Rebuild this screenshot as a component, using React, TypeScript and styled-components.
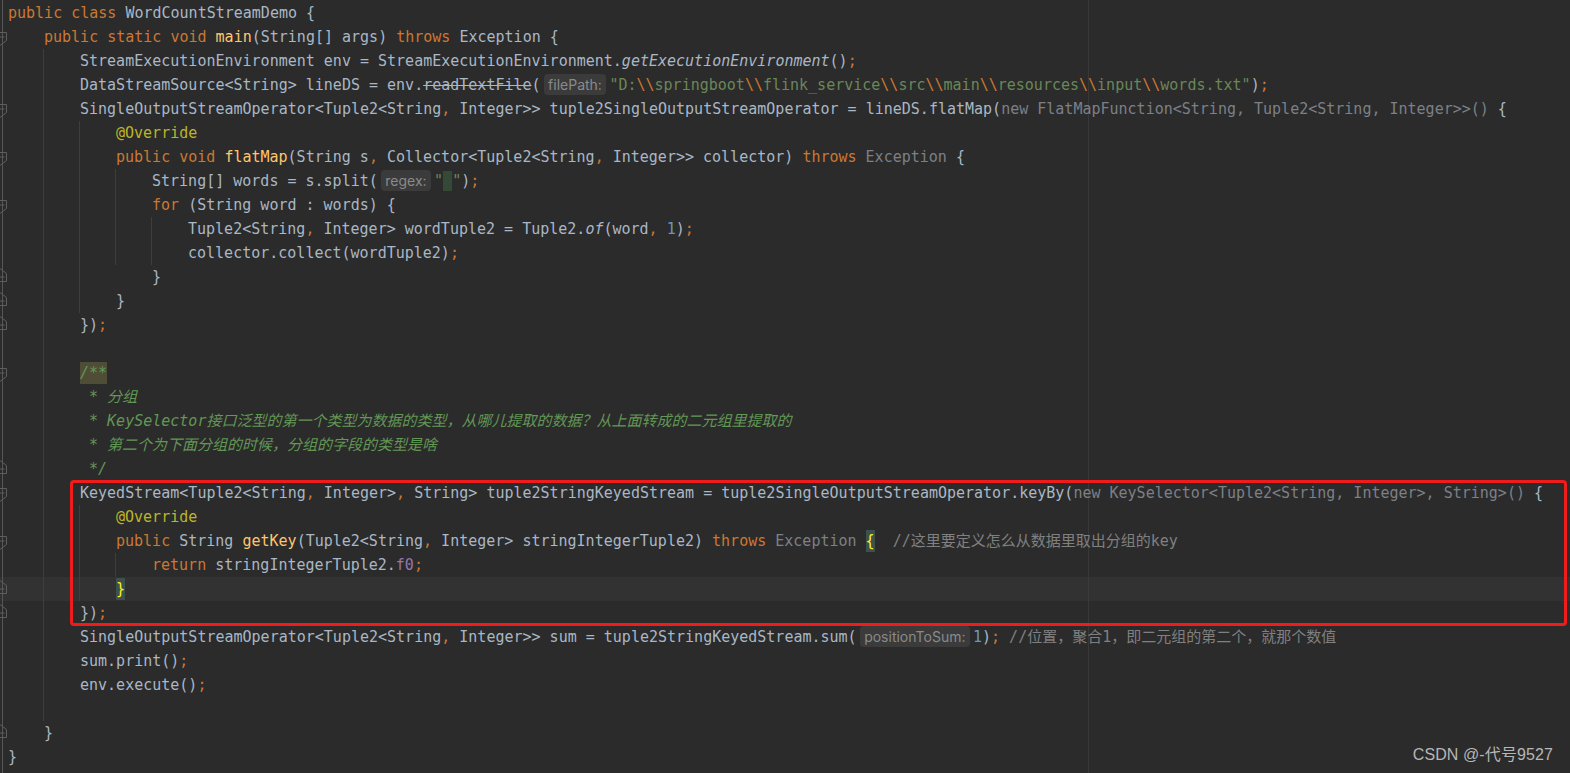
import React from 'react';
import styled, { createGlobalStyle, css } from 'styled-components';

const GlobalStyle = createGlobalStyle`
  html, body { margin: 0; padding: 0; background: #2b2b2b; }
  #root { width: 1570px; height: 773px; }
`;

type Kind =
  | 't' | 'k' | 'm' | 'a' | 's' | 'e' | 'c' | 'lc' | 'g' | 'i' | 'f' | 'n' | 'p' | 'st'
  | 'hint' | 'ws' | 'bm' | 'dh';
type Seg = [Kind, string];

interface LineData {
  indent: number;
  guides: number[];
  fold?: 'start' | 'end';
  current?: boolean;
  segs: Seg[];
}

const Editor = styled.div`
  position: relative;
  width: 1570px;
  height: 773px;
  box-sizing: border-box;
  padding-top: 1px;
  overflow: hidden;
  display: flex;
  flex-direction: column;
  font-family: "DejaVu Sans Mono", "Noto Sans CJK SC", monospace;
  font-size: 15px;
  color: #a9b7c6;
  background:
    linear-gradient(#575757, #575757) no-repeat 2px 0 / 1px 100%,
    linear-gradient(#383838, #383838) no-repeat 1088px 0 / 1px 100%,
    #2b2b2b;
`;

const Row = styled.div<{ $current?: boolean }>`
  display: flex;
  flex: none;
  height: 24px;
  ${(p) =>
    p.$current &&
    css`
      background:
        linear-gradient(#575757, #575757) no-repeat 2px 0 / 1px 100%,
        linear-gradient(#3a3a3a, #3a3a3a) no-repeat 1088px 0 / 1px 100%,
        #323232;
    `}
`;

const GutterCell = styled.div`
  flex: none;
  width: 8px;
  height: 24px;
  display: flex;
`;

const IndentCell = styled.div<{ $guide: boolean }>`
  flex: none;
  width: 36px;
  height: 24px;
  ${(p) =>
    p.$guide &&
    css`
      background: linear-gradient(#3e3e3e, #3e3e3e) no-repeat 35px 0 / 1px 100%;
    `}
`;

const Code = styled.div`
  flex: 1;
  white-space: pre;
  line-height: 24px;
  height: 24px;
`;

const kindStyle: Record<string, ReturnType<typeof css>> = {
  t: css`color: #a9b7c6;`,
  k: css`color: #cc7832;`,
  m: css`color: #ffc66d;`,
  a: css`color: #bbb529;`,
  s: css`color: #6a8759;`,
  e: css`color: #cc7832;`,
  c: css`color: #629755; font-style: italic;`,
  lc: css`color: #808080;`,
  g: css`color: #7c8087;`,
  i: css`color: #a9b7c6; font-style: italic;`,
  f: css`color: #9876aa;`,
  n: css`color: #6897bb;`,
  p: css`color: #cc7832;`,
  st: css`color: #a9b7c6; text-decoration: line-through; text-decoration-thickness: 1px;`,
};

const Token = styled.span<{ $kind: Kind }>`
  ${(p) => kindStyle[p.$kind]}
`;

const Hint = styled.span`
  display: inline-block;
  vertical-align: top;
  height: 21px;
  margin: 1px 3px 0 3px;
  padding: 0 4.5px;
  border-radius: 4px;
  background: #3b3b3b;
  color: #8a8a8a;
  font-family: Inter, "Noto Sans", sans-serif;
  font-size: 14px;
  line-height: 21px;
`;

const SpaceMark = styled.span`
  display: inline-block;
  vertical-align: top;
  height: 20px;
  margin-top: 2px;
  line-height: 20px;
  background: #344a37;
`;

const BraceMatch = styled.span`
  display: inline-block;
  vertical-align: top;
  height: 22px;
  margin-top: 1px;
  line-height: 22px;
  background: #3b514d;
  color: #ffef28;
`;

const DocStart = styled.span`
  display: inline-block;
  vertical-align: top;
  height: 22px;
  margin-top: 1px;
  line-height: 22px;
  background: #4f4d35;
  color: #629755;
  font-style: italic;
`;

const Marked = styled.div`
  position: relative;
  display: flex;
  flex-direction: column;
  &::after {
    content: '';
    position: absolute;
    left: 70px;
    right: 3px;
    top: -1px;
    bottom: -1px;
    border: 3px solid #f01c1c;
    border-radius: 4px;
    pointer-events: none;
  }
`;

const Watermark = styled.div`
  position: absolute;
  right: 17px;
  bottom: 8px;
  font-family: "Liberation Sans", "Noto Sans CJK SC", sans-serif;
  font-size: 16px;
  color: #b6b6b6;
  letter-spacing: 0.1px;
`;

const FoldMarker: React.FC<{ type: 'start' | 'end' }> = ({ type }) => (
  <svg width="8" height="24" viewBox="0 0 8 24" fill="none">
    {type === 'start' ? (
      <path d="M-7 7.5H6.5V15.5L0 20.5L-7 15.5Z" stroke="#5e5e5e" strokeWidth="1" />
    ) : (
      <path d="M-7 16.5H6.5V8.5L0 3.5L-7 8.5Z" stroke="#5e5e5e" strokeWidth="1" />
    )}
    <path d="M0 12H4.5" stroke="#5e5e5e" strokeWidth="1" />
  </svg>
);

const G1 = [1];
const G12 = [1, 2];
const G123 = [1, 2, 3];
const G1234 = [1, 2, 3, 4];

const BS = '\\\\';

const lines: LineData[] = [
  { indent: 0, guides: [], segs: [['k', 'public class '], ['t', 'WordCountStreamDemo {']] },
  {
    indent: 1, guides: [], fold: 'start',
    segs: [['k', 'public static void '], ['m', 'main'], ['t', '(String[] args) '], ['k', 'throws '], ['t', 'Exception {']],
  },
  {
    indent: 2, guides: G1,
    segs: [['t', 'StreamExecutionEnvironment env = StreamExecutionEnvironment.'], ['i', 'getExecutionEnvironment'], ['t', '()'], ['p', ';']],
  },
  {
    indent: 2, guides: G1,
    segs: [
      ['t', 'DataStreamSource<String> lineDS = env.'], ['st', 'readTextFile'], ['t', '('], ['hint', 'filePath:'],
      ['s', '"D:'], ['e', BS], ['s', 'springboot'], ['e', BS], ['s', 'flink_service'], ['e', BS], ['s', 'src'], ['e', BS],
      ['s', 'main'], ['e', BS], ['s', 'resources'], ['e', BS], ['s', 'input'], ['e', BS], ['s', 'words.txt"'], ['t', ')'], ['p', ';'],
    ],
  },
  {
    indent: 2, guides: G1, fold: 'start',
    segs: [
      ['t', 'SingleOutputStreamOperator<Tuple2<String'], ['p', ','], ['t', ' Integer>> tuple2SingleOutputStreamOperator = lineDS.flatMap('],
      ['g', 'new FlatMapFunction<String, Tuple2<String, Integer>>() '], ['t', '{'],
    ],
  },
  { indent: 3, guides: G12, segs: [['a', '@Override']] },
  {
    indent: 3, guides: G12, fold: 'start',
    segs: [
      ['k', 'public void '], ['m', 'flatMap'], ['t', '(String s'], ['p', ','], ['t', ' Collector<Tuple2<String'], ['p', ','],
      ['t', ' Integer>> collector) '], ['k', 'throws '], ['g', 'Exception'], ['t', ' {'],
    ],
  },
  {
    indent: 4, guides: G123,
    segs: [['t', 'String[] words = s.split('], ['hint', 'regex:'], ['s', '"'], ['ws', ' '], ['s', '"'], ['t', ')'], ['p', ';']],
  },
  { indent: 4, guides: G123, fold: 'start', segs: [['k', 'for '], ['t', '(String word : words) {']] },
  {
    indent: 5, guides: G1234,
    segs: [['t', 'Tuple2<String'], ['p', ','], ['t', ' Integer> wordTuple2 = Tuple2.'], ['i', 'of'], ['t', '(word'], ['p', ','], ['t', ' '], ['n', '1'], ['t', ')'], ['p', ';']],
  },
  { indent: 5, guides: G1234, segs: [['t', 'collector.collect(wordTuple2)'], ['p', ';']] },
  { indent: 4, guides: G12, fold: 'end', segs: [['t', '}']] },
  { indent: 3, guides: G12, fold: 'end', segs: [['t', '}']] },
  { indent: 2, guides: G1, fold: 'end', segs: [['t', '})'], ['p', ';']] },
  { indent: 0, guides: G1, segs: [] },
  { indent: 2, guides: G1, fold: 'start', segs: [['dh', '/**']] },
  { indent: 2, guides: G1, segs: [['c', ' * 分组']] },
  { indent: 2, guides: G1, segs: [['c', ' * KeySelector接口泛型的第一个类型为数据的类型，从哪儿提取的数据？从上面转成的二元组里提取的']] },
  { indent: 2, guides: G1, segs: [['c', ' * 第二个为下面分组的时候，分组的字段的类型是啥']] },
  { indent: 2, guides: G1, fold: 'end', segs: [['c', ' */']] },
  {
    indent: 2, guides: G1, fold: 'start',
    segs: [
      ['t', 'KeyedStream<Tuple2<String'], ['p', ','], ['t', ' Integer>'], ['p', ','],
      ['t', ' String> tuple2StringKeyedStream = tuple2SingleOutputStreamOperator.keyBy('],
      ['g', 'new KeySelector<Tuple2<String, Integer>, String>() '], ['t', '{'],
    ],
  },
  { indent: 3, guides: G12, segs: [['a', '@Override']] },
  {
    indent: 3, guides: G12, fold: 'start',
    segs: [
      ['k', 'public '], ['t', 'String '], ['m', 'getKey'], ['t', '(Tuple2<String'], ['p', ','], ['t', ' Integer> stringIntegerTuple2) '],
      ['k', 'throws '], ['g', 'Exception '], ['bm', '{'], ['t', '  '], ['lc', '//这里要定义怎么从数据里取出分组的key'],
    ],
  },
  { indent: 4, guides: G123, segs: [['k', 'return '], ['t', 'stringIntegerTuple2.'], ['f', 'f0'], ['p', ';']] },
  { indent: 3, guides: G12, fold: 'end', current: true, segs: [['bm', '}']] },
  { indent: 2, guides: G1, fold: 'end', segs: [['t', '})'], ['p', ';']] },
  {
    indent: 2, guides: G1,
    segs: [
      ['t', 'SingleOutputStreamOperator<Tuple2<String'], ['p', ','], ['t', ' Integer>> sum = tuple2StringKeyedStream.sum('],
      ['hint', 'positionToSum:'], ['n', '1'], ['t', ')'], ['p', ';'], ['t', ' '], ['lc', '//位置，聚合1，即二元组的第二个，就那个数值'],
    ],
  },
  { indent: 2, guides: G1, segs: [['t', 'sum.print()'], ['p', ';']] },
  { indent: 2, guides: G1, segs: [['t', 'env.execute()'], ['p', ';']] },
  { indent: 0, guides: G1, segs: [] },
  { indent: 1, guides: [], fold: 'end', segs: [['t', '}']] },
  { indent: 0, guides: [], segs: [['t', '}']] },
];

const renderSeg = ([kind, text]: Seg, i: number) => {
  switch (kind) {
    case 'hint':
      return <Hint key={i}>{text}</Hint>;
    case 'ws':
      return <SpaceMark key={i}>{text}</SpaceMark>;
    case 'bm':
      return <BraceMatch key={i}>{text}</BraceMatch>;
    case 'dh':
      return <DocStart key={i}>{text}</DocStart>;
    default:
      return (
        <Token key={i} $kind={kind}>
          {text}
        </Token>
      );
  }
};

const CodeLine: React.FC<{ line: LineData }> = ({ line }) => {
  const maxGuide = line.guides.length ? Math.max(...line.guides) : 0;
  const cells = Math.max(line.indent, maxGuide);
  return (
    <Row $current={line.current}>
      <GutterCell>{line.fold && <FoldMarker type={line.fold} />}</GutterCell>
      {Array.from({ length: cells }, (_, k) => (
        <IndentCell key={k} $guide={line.guides.includes(k + 1)} />
      ))}
      <Code>{line.segs.map(renderSeg)}</Code>
    </Row>
  );
};

export default function App() {
  const before = lines.slice(0, 20);
  const marked = lines.slice(20, 26);
  const after = lines.slice(26);
  return (
    <>
      <GlobalStyle />
      <Editor>
        {before.map((l, i) => (
          <CodeLine key={i} line={l} />
        ))}
        <Marked>
          {marked.map((l, i) => (
            <CodeLine key={i} line={l} />
          ))}
        </Marked>
        {after.map((l, i) => (
          <CodeLine key={i} line={l} />
        ))}
        <Watermark>CSDN @-代号9527</Watermark>
      </Editor>
    </>
  );
}
